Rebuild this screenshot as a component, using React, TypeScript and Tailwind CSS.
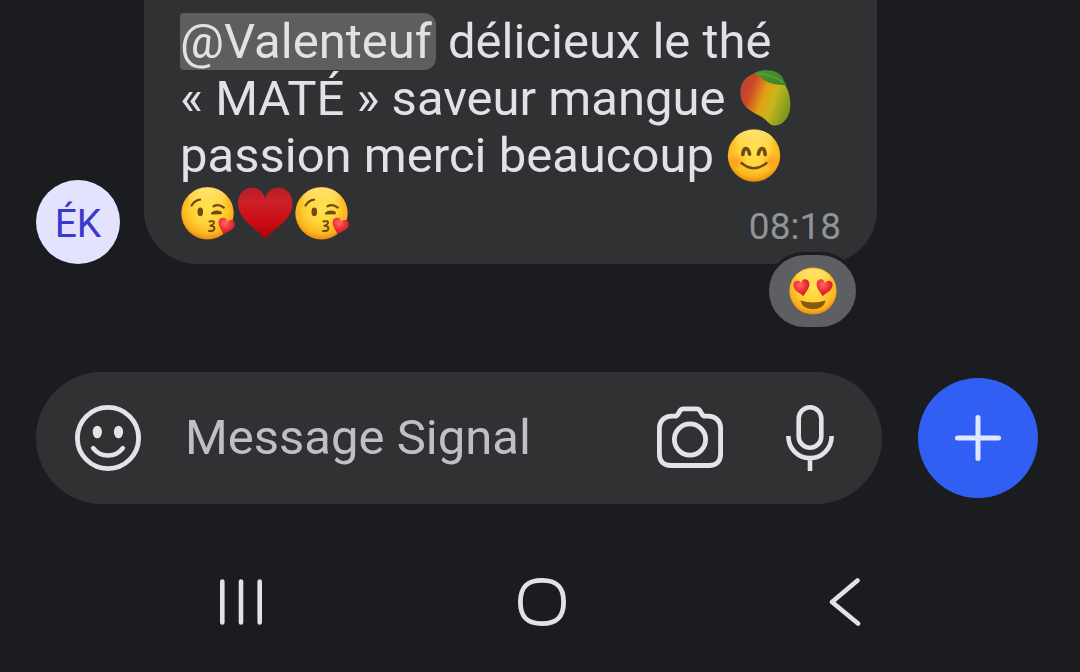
import type { ReactNode } from 'react';

const HEART = 'M50 94C42 80 4 58 4 30C4 14 15 5 28 5C39 5 47 13 50 23C53 13 61 5 72 5C85 5 96 14 96 30C96 58 58 80 50 94Z';

function EmojiGradients() {
  return (
    <svg className="absolute h-0 w-0" aria-hidden="true">
      <defs>
        <radialGradient id="face" cx="0.5" cy="0.42" r="0.6">
          <stop offset="0" stopColor="#ffe352" />
          <stop offset="0.5" stopColor="#ffd235" />
          <stop offset="0.8" stopColor="#fbb420" />
          <stop offset="1" stopColor="#e5800a" />
        </radialGradient>
        <linearGradient id="shine" x1="0" y1="0" x2="0" y2="1">
          <stop offset="0" stopColor="#fff6b0" stopOpacity="0.6" />
          <stop offset="1" stopColor="#ffe45f" stopOpacity="0" />
        </linearGradient>
        <radialGradient id="blush">
          <stop offset="0" stopColor="#ff7a1a" stopOpacity="0.5" />
          <stop offset="1" stopColor="#ff7a1a" stopOpacity="0" />
        </radialGradient>
        <linearGradient id="heart" x1="0" y1="0" x2="0" y2="1">
          <stop offset="0" stopColor="#b51c24" />
          <stop offset="0.25" stopColor="#cc2129" />
          <stop offset="0.65" stopColor="#cb0d14" />
          <stop offset="1" stopColor="#a60008" />
        </linearGradient>
        <radialGradient id="smallHeart" cx="0.4" cy="0.3" r="0.7">
          <stop offset="0" stopColor="#ff6a63" />
          <stop offset="0.5" stopColor="#f03239" />
          <stop offset="1" stopColor="#cd1721" />
        </radialGradient>
        <linearGradient id="mango" x1="0" y1="0.3" x2="1" y2="0.7">
          <stop offset="0" stopColor="#b8433a" />
          <stop offset="0.2" stopColor="#cf4a26" />
          <stop offset="0.45" stopColor="#e2a017" />
          <stop offset="0.65" stopColor="#c9b61c" />
          <stop offset="1" stopColor="#6f9420" />
        </linearGradient>
        <linearGradient id="leaf" x1="0" y1="0" x2="1" y2="1">
          <stop offset="0" stopColor="#4b9a2c" />
          <stop offset="1" stopColor="#3a7f2a" />
        </linearGradient>
      </defs>
    </svg>
  );
}

function Emoji({ label, children }: { label: string; children: ReactNode }) {
  return (
    <svg role="img" aria-label={label} viewBox="0 0 57 57" className="inline-block size-[57px] align-top">
      {children}
    </svg>
  );
}

function Blush() {
  return (
    <Emoji label="😊">
      <circle cx="28" cy="28.5" r="26.2" fill="url(#face)" />
      <ellipse cx="28" cy="14" rx="19" ry="11" fill="url(#shine)" />
      <circle cx="11" cy="34" r="9" fill="url(#blush)" />
      <circle cx="45" cy="34" r="9" fill="url(#blush)" />
      <g fill="none" stroke="#6f4b12" strokeLinecap="round">
        <path d="M16.8 27.5C17.4 19.6 22 19.6 23.6 27.2" strokeWidth="3.6" />
        <path d="M32.4 27.2C34 19.6 38.6 19.6 39.2 27.5" strokeWidth="3.6" />
        <path d="M15.5 36Q28 46.5 40.5 36" strokeWidth="2.4" />
      </g>
    </Emoji>
  );
}

function Kiss() {
  return (
    <Emoji label="😘">
      <circle cx="27.5" cy="29.3" r="26.2" fill="url(#face)" />
      <ellipse cx="27.5" cy="15" rx="19" ry="11" fill="url(#shine)" />
      <ellipse cx="20.3" cy="27.8" rx="2.8" ry="4.4" fill="#6f4b12" />
      <g fill="none" stroke="#6f4b12" strokeLinecap="round" strokeLinejoin="round">
        <path d="M11.6 21.5Q14.5 16.5 20 15.7" strokeWidth="2.2" />
        <path d="M33.6 22.3Q38.5 19.2 43.8 23.6" strokeWidth="2.2" />
        <path d="M31.8 29.4Q35.5 26 40.6 28.4M32.5 29.6L41 29.2" strokeWidth="2" />
        <path d="M29.4 37.4Q34.6 36.4 34 39Q33.4 40.8 30.4 41.8Q34.8 42 34.4 44.8Q33.8 47.6 29 47" strokeWidth="2" />
      </g>
      <path d={HEART} transform="translate(39.6 31.6) rotate(16) scale(0.18)" fill="url(#smallHeart)" />
    </Emoji>
  );
}

function RedHeart() {
  return (
    <Emoji label="♥️">
      <path
        d="M28.2 56C23 46 1 37.5 1 19.5C1 9.5 7.5 3.5 15.5 3.5C22 3.5 26.6 8.3 28.2 14.5C29.8 8.3 34.4 3.5 41 3.5C49 3.5 55.5 9.5 55.5 19.5C55.5 37.5 33.4 46 28.2 56Z"
        fill="url(#heart)"
      />
    </Emoji>
  );
}

function Mango() {
  return (
    <Emoji label="🥭">
      <path
        d="M16 3.8C8 6 2.3 13 2.3 21.5C2.3 30 5.500 35.500 11.500 40C17 44 22 45.200 26.500 49C30 52 32.500 55.800 37 55.600C46 55 52.400 46 52.400 35C52.400 26 50 17.500 44 11C36 3.500 25 1.500 16 3.8Z"
        fill="url(#mango)"
      />
      <path d="M15.500 3.500C23-0.500 33-1 39 2.500C44 5.500 45.500 8.500 46 11.200L49 14.800C42.500 15.500 33.500 14.500 27.500 11C23.500 8.500 20 5 15.500 3.500Z" fill="url(#leaf)" />
      <path d="M19 3.600Q34 4 45.500 12.500" fill="none" stroke="#6aa845" strokeWidth="1" />
    </Emoji>
  );
}

function HeartEyes() {
  return (
    <svg role="img" aria-label="😍" viewBox="0 0 48 48" className="size-12">
      <circle cx="24" cy="24" r="23.6" fill="url(#face)" />
      <ellipse cx="24" cy="11" rx="17" ry="9" fill="url(#shine)" />
      <path d={HEART} transform="translate(2.800 13.600) rotate(-10) scale(0.175 0.185)" fill="url(#smallHeart)" />
      <path d={HEART} transform="translate(28 10.600) rotate(10) scale(0.175 0.185)" fill="url(#smallHeart)" />
      <path d="M11.500 33.500Q24 37.500 36.500 33.500C35.500 39.500 30 42.200 24 42.200C18 42.200 12.500 39.500 11.500 33.500Z" fill="#87590f" />
    </svg>
  );
}

function SmileIcon() {
  return (
    <svg viewBox="0 0 66 66" fill="none" stroke="currentColor" className="size-[66px]">
      <circle cx="33" cy="33" r="30.600" strokeWidth="4.800" />
      <ellipse cx="22.300" cy="27" rx="4.600" ry="6.300" fill="currentColor" stroke="none" />
      <ellipse cx="43.500" cy="27" rx="4.600" ry="6.300" fill="currentColor" stroke="none" />
      <path d="M18.200 43.200C25.500 53 40.500 53 47.800 43.200" strokeWidth="4.600" strokeLinecap="round" />
    </svg>
  );
}

function CameraIcon() {
  return (
    <svg viewBox="0 0 66 66" fill="none" stroke="currentColor" strokeWidth="4.800" className="size-[66px]">
      <path d="M14.500 11.200H18C19.500 11.200 20.200 10.700 21 9.300L23 5.800C23.800 4.400 24.600 3.800 26.300 3.800H39.700C41.400 3.800 42.200 4.400 43 5.800L45 9.300C45.800 10.700 46.500 11.200 48 11.200H51.500C58.500 11.200 63.600 16.200 63.600 23V49C63.600 56.500 59.500 60.500 52 60.500H14C6.500 60.500 2.400 56.500 2.400 49V23C2.400 16.200 7.500 11.200 14.500 11.200Z" />
      <circle cx="33" cy="34.500" r="15.600" />
    </svg>
  );
}

function MicIcon() {
  return (
    <svg viewBox="0 0 48 66" fill="none" stroke="currentColor" strokeWidth="4.600" className="h-[66px] w-12">
      <rect x="12.700" y="2.300" width="22.600" height="40.400" rx="11.300" />
      <path d="M2.400 31V31.500A21.600 21.600 0 0 0 45.600 31.500V31M24 53V66" />
    </svg>
  );
}

function Message() {
  return (
    <div className="flex items-end gap-6 pl-9 pr-[203px]">
      <div className="flex size-[84px] shrink-0 items-center justify-center rounded-full bg-[#e3e3fe] pt-1 text-[39px] text-[#3b38cf]">
        ÉK
      </div>
      <article className="relative flex-1 rounded-b-[54px] bg-[#303133] px-9 pb-[23px] pt-[13px] text-[49px] leading-[57px] text-[#e2e1e6]">
        <p className="whitespace-nowrap">
          <span className="inline-block rounded-l-sm rounded-r-xl bg-[#5e5e5e] pr-1">@Valenteuf</span> délicieux le thé
          <br />
          «&nbsp;MATÉ&nbsp;» saveur mangue <Mango />
          <br />
          passion merci beaucoup <Blush />
        </p>
        <div className="flex items-end justify-between">
          <div className="flex">
            <Kiss />
            <RedHeart />
            <Kiss />
          </div>
          <time className="text-[37px] leading-7 text-[#929299]">08:18</time>
        </div>
        <button
          type="button"
          className="absolute -bottom-[66px] right-[18px] flex h-[78px] w-[93px] items-center justify-center rounded-full border-3 border-[#1b1c1f] bg-[#5e5f62]"
        >
          <HeartEyes />
        </button>
      </article>
    </div>
  );
}

function Composer() {
  return (
    <form className="mt-[108px] flex items-center gap-9 pl-9 pr-[42px]" onSubmit={e => e.preventDefault()}>
      <div className="flex h-[132px] min-w-0 flex-1 items-center rounded-full bg-[#303133] pl-[39px] pr-12 text-[#e4e3e7]">
        <button type="button" aria-label="Emoji">
          <SmileIcon />
        </button>
        <input
          type="text"
          aria-label="Message Signal"
          placeholder="Message Signal"
          className="ml-11 h-[68px] min-w-0 flex-1 bg-transparent text-[49px] outline-none placeholder:text-[#bfbfc8]"
        />
        <button type="button" aria-label="Photo">
          <CameraIcon />
        </button>
        <button type="button" aria-label="Audio" className="ml-[63px]">
          <MicIcon />
        </button>
      </div>
      <button
        type="button"
        aria-label="Ajouter"
        className="flex size-[120px] shrink-0 items-center justify-center rounded-full bg-[#315ff4] text-[#e1e7fd]"
      >
        <svg viewBox="0 0 46 46" stroke="currentColor" strokeWidth="5" strokeLinecap="round" className="size-[46px]">
          <path d="M23 2.500V43.500M2.500 23H43.500" />
        </svg>
      </button>
    </form>
  );
}

function NavBar() {
  return (
    <nav className="mt-[74px] grid grid-cols-3 justify-items-center pb-[46px] pl-[90px] pr-[86px] text-[#e2e2e2]">
      <button type="button" aria-label="Applications récentes">
        <svg viewBox="0 0 48 48" stroke="currentColor" strokeWidth="4.600" strokeLinecap="round" className="size-12">
          <path d="M5.300 3.500V44.500M24 3.500V44.500M42.700 3.500V44.500" />
        </svg>
      </button>
      <button type="button" aria-label="Accueil">
        <svg viewBox="0 0 48 48" fill="none" stroke="currentColor" strokeWidth="4.800" className="size-12">
          <path d="M24 2.400C39 2.400 45.600 9 45.600 24C45.600 39 39 45.600 24 45.600C9 45.600 2.400 39 2.400 24C2.400 9 9 2.400 24 2.400Z" />
        </svg>
      </button>
      <button type="button" aria-label="Retour">
        <svg
          viewBox="0 0 48 48"
          fill="none"
          stroke="currentColor"
          strokeWidth="4.600"
          strokeLinecap="round"
          strokeLinejoin="round"
          className="size-12"
        >
          <path d="M38.500 2.500L13 24L39 45.500" />
        </svg>
      </button>
    </nav>
  );
}

export default function App() {
  return (
    <main className="flex min-h-screen flex-col bg-[#1b1c1f] font-['Roboto',sans-serif]">
      <EmojiGradients />
      <Message />
      <Composer />
      <NavBar />
    </main>
  );
}
